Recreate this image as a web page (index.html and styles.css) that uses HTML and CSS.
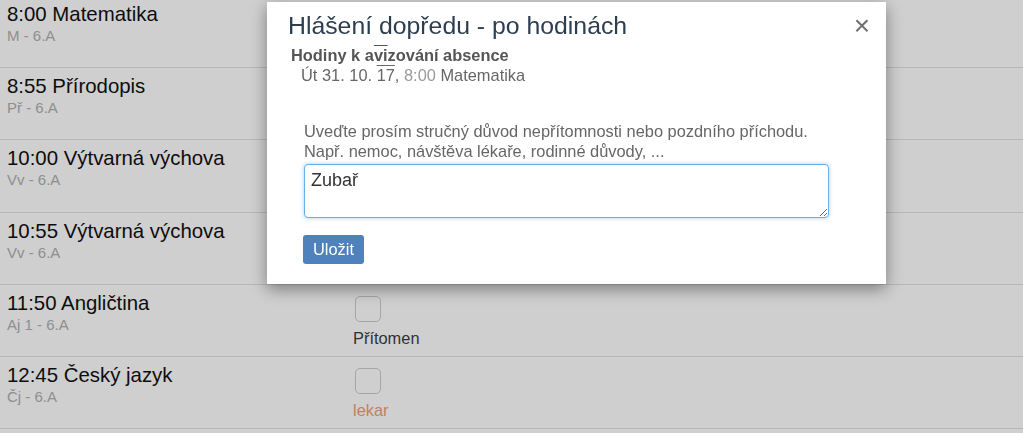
FILE: index.html
```html
<!DOCTYPE html>
<html lang="cs">
<head>
  <meta charset="UTF-8">
  <title>Hlášení dopředu</title>
  <link rel="stylesheet" href="styles.css">
</head>
<body>
  <div class="lessons">
    <div class="lesson">
      <div class="info"><div class="name">8:00 Matematika</div><div class="sub">M - 6.A</div></div>
      <div class="mark"><span class="box"></span><span class="state">Přítomen</span></div>
    </div>
    <div class="lesson">
      <div class="info"><div class="name">8:55 Přírodopis</div><div class="sub">Př - 6.A</div></div>
      <div class="mark"><span class="box"></span><span class="state">Přítomen</span></div>
    </div>
    <div class="lesson">
      <div class="info"><div class="name">10:00 Výtvarná výchova</div><div class="sub">Vv - 6.A</div></div>
      <div class="mark"><span class="box"></span><span class="state">Přítomen</span></div>
    </div>
    <div class="lesson">
      <div class="info"><div class="name">10:55 Výtvarná výchova</div><div class="sub">Vv - 6.A</div></div>
      <div class="mark"><span class="box"></span><span class="state">Přítomen</span></div>
    </div>
    <div class="lesson">
      <div class="info"><div class="name">11:50 Angličtina</div><div class="sub">Aj 1 - 6.A</div></div>
      <div class="mark"><span class="box"></span><span class="state">Přítomen</span></div>
    </div>
    <div class="lesson">
      <div class="info"><div class="name">12:45 Český jazyk</div><div class="sub">Čj - 6.A</div></div>
      <div class="mark"><span class="box"></span><span class="state lekar">lekar</span></div>
    </div>
  </div>

  <div class="backdrop"></div>

  <div class="modal">
    <div class="modal-header">
      <h4>Hlášení dopředu - po hodinách</h4>
      <span class="close">×</span>
    </div>
    <div class="modal-body">
      <h5>Hodiny k a<span class="over">vi</span>zování absence</h5>
      <div class="hours">Út 31. 10. <span class="over">17</span>, <span class="time">8:00</span> Matematika</div>
      <div class="reason">
        <p>Uveďte prosím stručný důvod nepřítomnosti nebo pozdního příchodu.<br>Např. nemoc, návštěva lékaře, rodinné důvody, ...</p>
        <textarea>Zubař</textarea>
        <button>Uložit</button>
      </div>
    </div>
  </div>
</body>
</html>
```

FILE: styles.css
```css
body { margin: 0; font-family: "Liberation Sans", Arial, sans-serif; background: #fff; overflow: hidden; }
.lessons { margin-top: -4px; }
.lesson { display: flex; height: 71.2px; border-bottom: 1px solid #e0e0e0; padding-left: 7px; }
.info { width: 346px; padding-top: 7px; }
.name { font-size: 20.4px; line-height: 22px; color: #111; }
.sub { font-size: 15px; line-height: 16px; color: #b0b0b0; margin-top: 3px; }
.mark { display: flex; flex-direction: column; align-items: flex-start; padding-top: 11px; }
.box { width: 26px; height: 26px; box-sizing: border-box; border: 1px solid #cdcdcd; border-radius: 5px; background: #fff; margin-left: 2px; }
.state { font-size: 16.4px; line-height: 18px; margin-top: 7px; color: #3d3d3d; }
.lekar { color: #f0a070; }

.backdrop { position: fixed; top: 0; left: 0; right: 0; bottom: 0; background: rgba(0,0,0,0.19); }

.modal { position: absolute; left: 267px; top: 2px; width: 619px; height: 282px; background: #fff; box-shadow: 0 5px 15px rgba(0,0,0,0.4); }
.modal-header { display: flex; justify-content: space-between; align-items: center; padding: 9px 16px 4px 21px; }
.modal-header h4 { margin: 0; font-size: 24.8px; line-height: 30px; font-weight: normal; color: #2c3e50; }
.close { font-size: 28px; line-height: 30px; color: #6f6f6f; }
.modal-body { padding-left: 24px; }
.modal-body h5 { margin: 0; font-size: 16.4px; line-height: 20px; color: #555; }
.over { text-decoration: overline; }
.hours { padding-left: 10px; font-size: 16.4px; line-height: 18px; color: #666; margin-top: 1px; }
.time { color: #9a9a9a; }
.reason { padding-left: 13px; margin-top: 37px; }
.reason p { margin: 0; font-size: 16.4px; line-height: 20px; color: #666; }
textarea { display: block; margin-top: 3px; width: 525px; height: 54px; box-sizing: border-box; border: 1px solid #66afe9; border-radius: 4px; box-shadow: 0 0 4px rgba(102,175,233,0.6); padding: 5px 6px; font-family: "Liberation Sans", Arial, sans-serif; font-size: 18px; color: #333; resize: vertical; outline: none; }
button { display: block; margin-top: 17px; margin-left: -1px; width: 61px; height: 29px; border: none; border-radius: 3px; background: #4f81bd; color: #fff; font-family: "Liberation Sans", Arial, sans-serif; font-size: 16.4px; padding: 0; }
```
